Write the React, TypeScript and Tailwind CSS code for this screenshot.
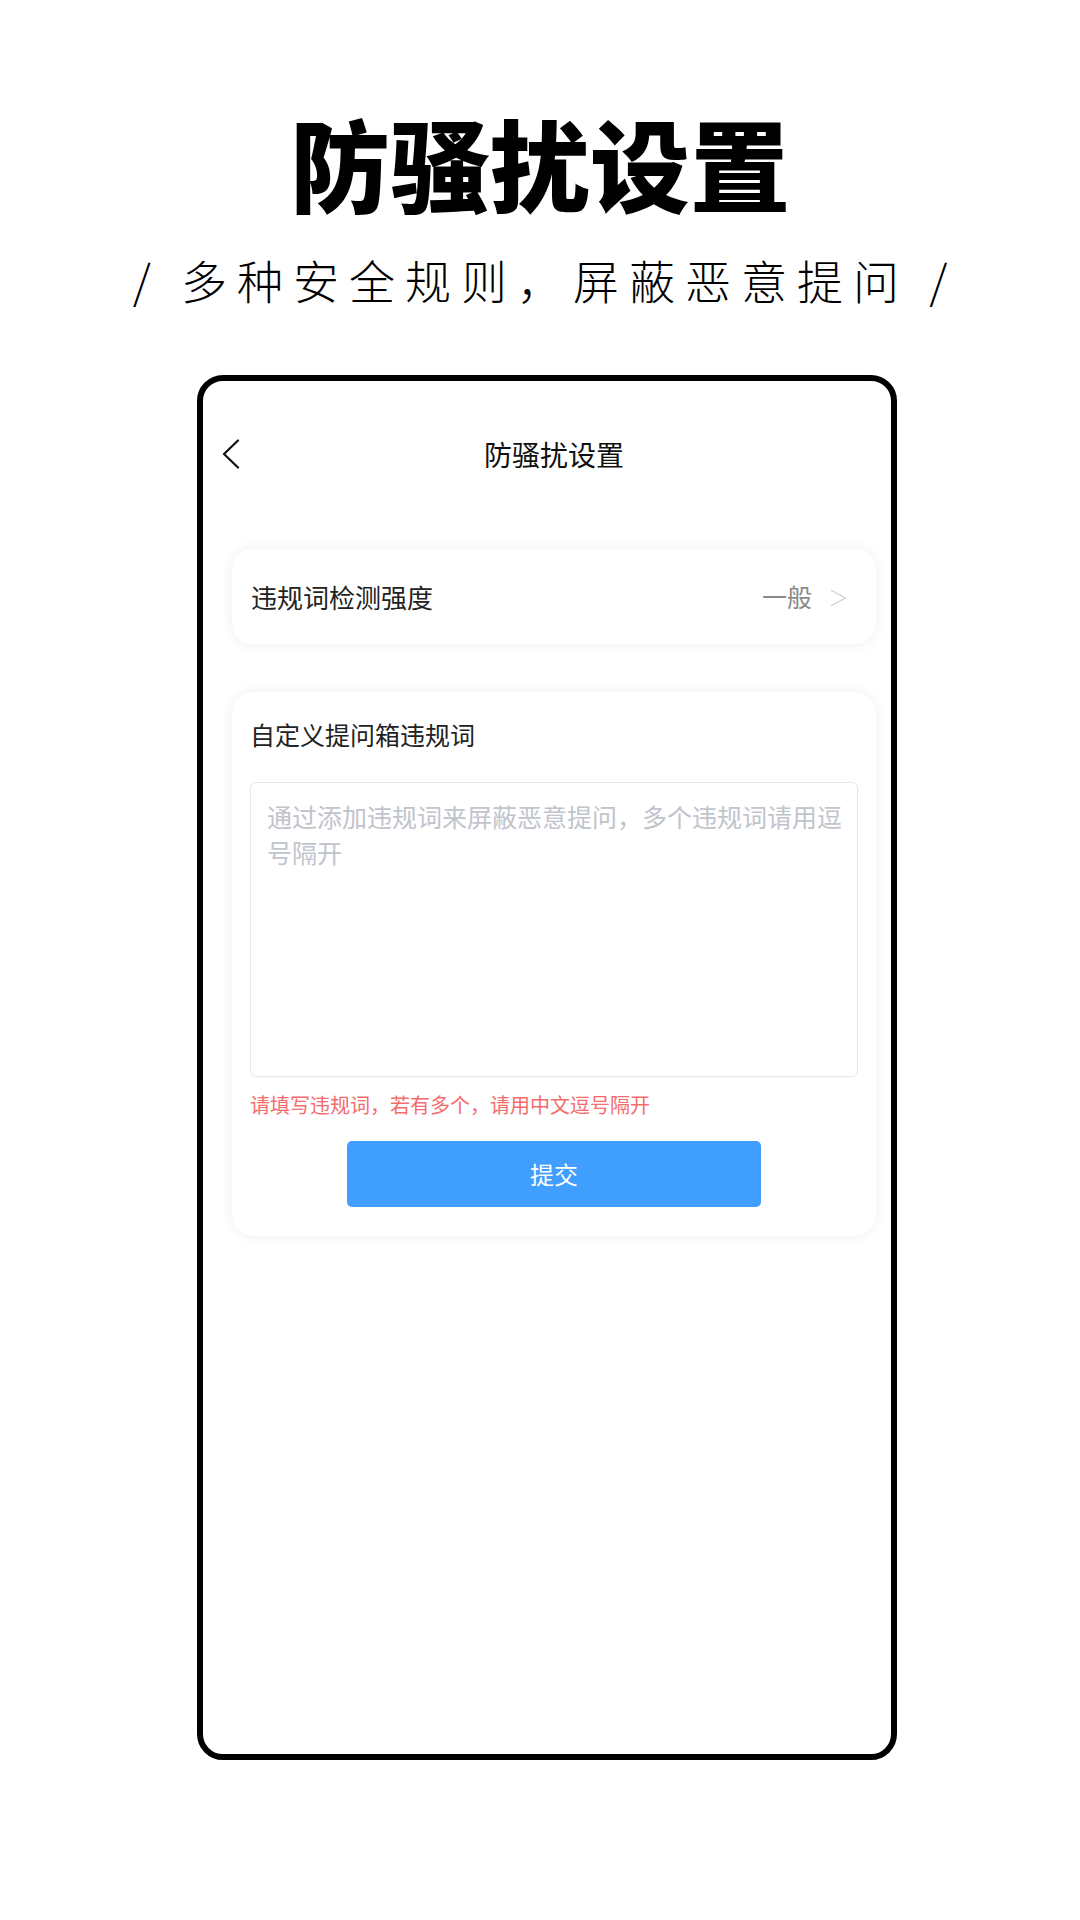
import React from "react";

const CJK = { fontFamily: '"Noto Sans CJK SC", "Noto Sans", sans-serif' };

export default function App() {
  return (
    <div className="w-[1080px] h-[1920px] bg-white overflow-hidden" style={CJK}>
      <div className="pt-[112px] text-center text-[100px] leading-none font-black text-black">
        防骚扰设置
      </div>
      <div className="mt-[44px] flex justify-center text-[46px] leading-none font-light text-black tracking-[10px] pl-[10px]">
        / 多种安全规则，屏蔽恶意提问 /
      </div>
      <div className="mt-[73px] ml-[197px] w-[700px] h-[1385px] border-[6px] border-black rounded-[26px] bg-white">
        <div className="mt-[45px] h-[56px] grid grid-cols-[1fr_auto_1fr] items-center pl-[19px] pr-[5px]">
          <div className="flex items-center">
            <svg width="18" height="30" viewBox="0 0 18 30" fill="none">
              <path d="M16 1.5 L2 15 L16 28.5" stroke="#111" strokeWidth="2.2" strokeLinecap="round" strokeLinejoin="round" />
            </svg>
          </div>
          <div className="text-[28px] leading-none text-[#111]">防骚扰设置</div>
          <div />
        </div>
        <div className="ml-[29px] mr-[15px]">
          <div className="mt-[67px] h-[95px] rounded-[20px] bg-white shadow-[0_0_14px_rgba(0,0,0,0.07)] flex items-center justify-between pl-[19px] pr-[29px]">
            <span className="text-[26px] leading-none text-[#222]">违规词检测强度</span>
            <span className="flex items-center gap-[18px]">
              <span className="text-[25px] leading-none text-[#8a8a8a]">一般</span>
              <svg width="17" height="18" viewBox="0 0 17 18" fill="none" className="mt-[2px]">
                <path d="M1.5 1.5 L15.5 9 L1.5 16.5" stroke="#cfcfcf" strokeWidth="1.4" strokeLinecap="round" strokeLinejoin="round" />
              </svg>
            </span>
          </div>
          <div className="mt-[48px] rounded-[22px] bg-white shadow-[0_0_14px_rgba(0,0,0,0.07)] px-[18px] pt-[24px] pb-[29px]">
            <div className="text-[25px] leading-[36px] text-[#222]">自定义提问箱违规词</div>
            <div className="mt-[30px] h-[295px] rounded-[6px] border border-[#e6e6e6] pl-[16px] pr-[10px] pt-[15px] text-[25px] leading-[36px] text-[#c0c4cc]">
              通过添加违规词来屏蔽恶意提问，多个违规词请用逗号隔开
            </div>
            <div className="mt-[14px] text-[20px] leading-[28px] text-[#f56c6c]">
              请填写违规词，若有多个，请用中文逗号隔开
            </div>
            <div className="mt-[22px] flex justify-center">
              <div className="w-[414px] h-[66px] rounded-[5px] bg-[#409eff] flex items-center justify-center text-[24px] leading-none text-white">
                提交
              </div>
            </div>
          </div>
        </div>
      </div>
    </div>
  );
}
